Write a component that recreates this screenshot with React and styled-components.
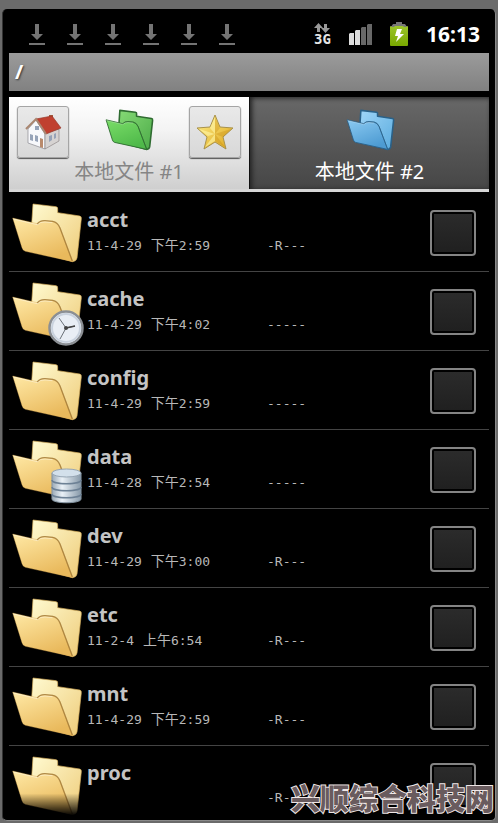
import React from "react";
import styled, { createGlobalStyle } from "styled-components";

const GlobalStyle = createGlobalStyle`
  * { box-sizing: border-box; }
  body {
    margin: 0;
    background: #6b6b6b;
    font-family: "Noto Sans", "Noto Sans CJK SC", sans-serif;
  }
  button { font: inherit; border: 0; padding: 0; margin: 0; cursor: pointer; }
  svg { display: block; }
`;

const Page = styled.div`
  height: 100vh;
  padding: 9px 2px 2px;
`;

const Device = styled.main`
  position: relative;
  display: flex;
  flex-direction: column;
  height: 100%;
  padding: 0 6px;
  overflow: hidden;
  background: #000;
  border: 1px solid #8a8a8a;
  border-width: 0 1px 1px;
  border-left-color: #333;
  border-radius: 5px;
`;

const StatusBar = styled.header`
  display: flex;
  flex: none;
  align-items: center;
  justify-content: space-between;
  height: 44px;
  padding: 6px 9px 0 20px;
`;

const StatusGroup = styled.div`
  display: flex;
  align-items: center;
  gap: ${(p) => p.$gap}px;
`;

const Network = styled.div`
  width: 17px;
  color: #e4e4e4;
  font: bold 14px/13px "DejaVu Sans Mono", monospace;
`;

const Clock = styled.time`
  color: #fff;
  font-size: 21px;
  font-weight: 700;
  line-height: 24px;
`;

const PathBar = styled.h1`
  flex: none;
  height: 38px;
  margin: 0 0 6px;
  padding-left: 6px;
  color: #fff;
  font-size: 20px;
  line-height: 37px;
  text-shadow: 1px 1px 2px #333;
  background: linear-gradient(#9b9b9b, #818181);
`;

const Tabs = styled.nav`
  display: grid;
  flex: none;
  grid-template-columns: 1fr 1fr;
  height: 95px;
  border-bottom: 3px solid #d6d6d6;
`;

const TabPanel = styled.div`
  display: flex;
  justify-content: space-between;
  padding: 0 8px;
  background: ${(p) =>
    p.$dark ? "linear-gradient(#686868, #464646)" : "linear-gradient(#fff, #f4f4f4 35%, #cfcfcf)"};
  ${(p) => p.$dark && "justify-content: center; box-shadow: inset 2px 1px 5px #222; border-left: 1px solid #111;"}
`;

const TabButton = styled.button`
  display: flex;
  flex-direction: column;
  align-items: center;
  gap: 9px;
  padding: 12px 0 0;
  color: ${(p) => (p.$dark ? "#fff" : "#858585")};
  font-size: 20px;
  line-height: 24px;
  white-space: nowrap;
  background: none;
`;

const ToolButton = styled.button`
  display: flex;
  align-items: center;
  justify-content: center;
  width: 52px;
  height: 52px;
  margin-top: 9px;
  background: linear-gradient(#e9e9e9, #d8d8d8);
  && { border: 1px solid #a5a5a5; }
  border-radius: 3px;
  box-shadow: 0 1px 1px #555;
`;

const List = styled.ul`
  flex: 1;
  min-height: 0;
  margin: 0;
  padding: 1px 0 0;
  overflow: hidden;
  list-style: none;
`;

const Row = styled.li`
  display: flex;
  align-items: flex-start;
  height: 79px;
  padding: 9px 13px 0 1px;
  border-bottom: 1px solid #444;
`;

const IconBox = styled.div`
  position: relative;
  flex: none;
  width: 77px;
  ${(p) => p.$faded && "mask-image: linear-gradient(#000 62%, transparent 98%);"}
`;

const Badge = styled.div`
  position: absolute;
  right: ${(p) => p.$right}px;
  bottom: -3px;
`;

const Info = styled.div`
  flex: 1;
  min-width: 0;
  padding-top: 4px;
`;

const Name = styled.label`
  display: block;
  color: #c4c4c4;
  font-size: 20px;
  font-weight: 700;
  line-height: 28px;
`;

const Meta = styled.div`
  display: grid;
  grid-template-columns: 180px 1fr;
  align-items: baseline;
  padding-top: 1px;
  color: #b8b8b8;
  font: 13px/20px "DejaVu Sans Mono", "Noto Sans CJK SC", monospace;
`;

const Stamp = styled.span`
  display: flex;
  align-items: baseline;
  gap: 9px;
`;

const Period = styled.span`
  font-size: 14px;
`;

const Check = styled.input`
  appearance: none;
  flex: none;
  width: 46px;
  height: 46px;
  margin: 8px 0 0;
  padding: 2px;
  background: linear-gradient(#2b2b2b, #202020) content-box;
  border: 2px solid #848484;
  border-radius: 4px;
  &:checked { background-color: #777; }
`;

const Watermark = styled.div`
  position: absolute;
  right: 1px;
  bottom: 3px;
  color: #695b5e;
  font: 900 29px/40px "Noto Sans CJK SC", sans-serif;
  white-space: nowrap;
  -webkit-text-stroke: 2px #efe6e6;
  paint-order: stroke fill;
`;

const DownloadIcon = () => (
  <svg width="16" height="21" viewBox="0 0 16 21" fill="#747474" aria-hidden="true">
    <path d="M6 0h4v10h4l-6 6-6-6h4zM0 19h16v2H0z" />
  </svg>
);

const DataArrows = () => (
  <svg width="16" height="10" viewBox="0 0 16 10" fill="#999" aria-hidden="true">
    <path d="M4.500 0L9 5H6v4H3V5H0zM10 1h3v4h3l-4.500 5L7 5h3z" />
  </svg>
);

const SignalIcon = () => (
  <svg width="23" height="21" viewBox="0 0 23 21" aria-label="Signal">
    <path fill="#dedede" d="M0 10l1-1h4v12H0zM6 7l1-1h4v15H6z" />
    <path fill="#686868" d="M12 4l1-1h4v18h-5zM18 1l1-1h4v21h-5z" />
  </svg>
);

const BatteryIcon = () => (
  <svg width="18" height="24" viewBox="0 0 18 24" aria-label="Battery charging">
    <defs>
      <linearGradient id="battery" x2="0" y2="1">
        <stop stopColor="#9bc52a" />
        <stop offset="1" stopColor="#79a800" />
      </linearGradient>
    </defs>
    <rect y="4" width="18" height="20" rx="1" fill="url(#battery)" />
    <path fill="#777" d="M6 0h6v2h3l2 3h-3l-1-1H5L4 5H1l2-3h3z" />
    <path fill="#fff" d="M7 7h5l-2 5h4L6 20l2-6H5z" />
  </svg>
);

const palettes = {
  yellow: { back: ["#fffbd2", "#eecb78"], front: ["#ffe9a6", "#e9b95c"], edge: "#9b7130" },
  green: { back: ["#86da76", "#4cab48"], front: ["#7add68", "#4fb94a"], edge: "#2f6b31" },
  blue: { back: ["#a0d6f8", "#5aabde"], front: ["#8bcaf2", "#4d9bd2"], edge: "#2a6188" },
};

const FolderIcon = ({ tone, width, height }) => {
  const p = palettes[tone];
  const small = tone !== "yellow";
  return (
    <svg width={width} height={height} viewBox="30 36 219 186" aria-hidden="true">
      <defs>
        <linearGradient id={`${tone}-back`} x2="1" y2="1">
          <stop stopColor={p.back[0]} />
          <stop offset="1" stopColor={p.back[1]} />
        </linearGradient>
        <linearGradient id={`${tone}-front`} x2="0.500" y2="1">
          <stop stopColor={p.front[0]} />
          <stop offset="1" stopColor={p.front[1]} />
        </linearGradient>
      </defs>
      <g strokeLinejoin="round">
        <path
          fill={`url(#${tone}-back)`}
          stroke={small ? p.edge : "#d9b05c"}
          strokeWidth={small ? 7 : 2}
          d="M99 42L168 50Q174 51 173 57L173 68L239 78Q245 79 244 86L231 204Q229 214 218 215L90 180Z"
        />
        <path
          fill={`url(#${tone}-front)`}
          stroke={small ? p.edge : "#d9a850"}
          strokeWidth={small ? 4 : 1}
          d="M38 84L112 101Q120 91 135 92L158 94Q173 97 180 114L218 215L76 184Q68 181 66 173Z"
        />
      </g>
      <path
        d="M112 102Q120 91 135 92L158 94Q173 97 180 114L217 213"
        fill="none"
        stroke={p.edge}
        strokeWidth={small ? 3 : 4}
        strokeOpacity=".75"
      />
      <path d="M40 87L112 104Q121 95 135 96L157 98" fill="none" stroke="#fff" strokeOpacity=".4" strokeWidth="3" />
    </svg>
  );
};

const HomeIcon = () => (
  <svg width="38" height="38" viewBox="0 0 38 38" aria-hidden="true">
    <path fill="#a25a3c" d="M25 2h4v9h-4z" />
    <path fill="#f7f8fb" stroke="#8a8a90" strokeWidth=".7" d="M4 16L12 7l9 14v15L4 30z" />
    <path fill="#d6d3d2" stroke="#817878" strokeWidth=".6" d="M21 20l14-4v12l-14 8z" />
    <path fill="#c0402f" stroke="#96392c" strokeWidth=".7" d="M12 6L28 3l9 12-15 6z" />
    <path fill="none" stroke="#a98670" strokeWidth="2" d="M2 16L12 6l10 15" />
    <path fill="#96a3b8" d="M6 21l3 1v6l-3-1zM11 22l3 1v6l-3-1zM11 13h4v4h-4zM25 23l3-1v5l-3 2zM30 21l2-1v5l-2 1z" />
    <path fill="#b98a6c" d="M16 25l3 1v9l-3-1z" />
  </svg>
);

const StarIcon = () => (
  <svg width="38" height="38" viewBox="0 0 38 38" aria-hidden="true">
    <defs>
      <linearGradient id="star" x2="1" y2="1">
        <stop stopColor="#fff08a" />
        <stop offset="1" stopColor="#dda51c" />
      </linearGradient>
    </defs>
    <path
      fill="url(#star)"
      stroke="#a9924b"
      strokeLinejoin="round"
      d="M19 2l5 12 13 1-10 9 3 12-11-7-11 7 3-12L1 15l13-1z"
    />
    <path fill="#fff6a8" fillOpacity=".6" d="M19 4v17l-5-6zM3 16l16 5-7 2zM9 34l10-13v7z" />
    <path fill="#b87800" fillOpacity=".25" d="M19 4l5 11-5 6zM35 16l-16 5 8 3zM29 34L19 21v7z" />
  </svg>
);

const ClockBadge = () => (
  <svg width="36" height="36" viewBox="0 0 36 36" aria-hidden="true">
    <circle cx="18" cy="18" r="16.500" fill="#e9eef5" stroke="#8b8f94" strokeWidth="2.500" />
    <circle cx="18" cy="18" r="14" fill="none" stroke="#c9d2de" strokeWidth="2" />
    <path d="M11 8l7 10 9-2M18 18l-6 11" fill="none" stroke="#6b7178" strokeWidth="1" />
    <path d="M18 18l9-2" stroke="#444" strokeWidth="1.500" />
    <circle cx="18" cy="18" r="2" fill="#444" />
  </svg>
);

const DatabaseBadge = () => (
  <svg width="31" height="36" viewBox="0 0 32 36" preserveAspectRatio="none" aria-hidden="true">
    <defs>
      <linearGradient id="disk">
        <stop stopColor="#9aa9b6" />
        <stop offset=".35" stopColor="#eaf1f7" />
        <stop offset="1" stopColor="#8799a9" />
      </linearGradient>
    </defs>
    <path fill="url(#disk)" stroke="#8493a1" d="M1 5v26c0 5 30 5 30 0V5z" />
    <ellipse cx="16" cy="5" rx="15" ry="4" fill="#d3e0eb" stroke="#93a3b1" />
    <path fill="none" stroke="#6d8195" strokeWidth="1.500" d="M1 12c0 5 30 5 30 0M1 19c0 5 30 5 30 0M1 26c0 5 30 5 30 0" />
  </svg>
);

const files = [
  { name: "acct", date: "11-4-29", period: "下午", time: "2:59", mode: "-R---" },
  { name: "cache", date: "11-4-29", period: "下午", time: "4:02", mode: "-----", Mark: ClockBadge, right: 3 },
  { name: "config", date: "11-4-29", period: "下午", time: "2:59", mode: "-----" },
  { name: "data", date: "11-4-28", period: "下午", time: "2:54", mode: "-----", Mark: DatabaseBadge, right: 5 },
  { name: "dev", date: "11-4-29", period: "下午", time: "3:00", mode: "-R---" },
  { name: "etc", date: "11-2-4", period: "上午", time: "6:54", mode: "-R---" },
  { name: "mnt", date: "11-4-29", period: "下午", time: "2:59", mode: "-R---" },
  { name: "proc", mode: "-R-", faded: true },
];

const FileRow = ({ file }) => {
  const { Mark } = file;
  return (
    <Row>
      <IconBox $faded={file.faded}>
        <FolderIcon tone="yellow" width={73} height={62} />
        {Mark && (
          <Badge $right={file.right}>
            <Mark />
          </Badge>
        )}
      </IconBox>
      <Info>
        <Name htmlFor={`file-${file.name}`}>{file.name}</Name>
        <Meta>
          <Stamp>
            {file.date && (
              <>
                <span>{file.date}</span>
                <span>
                  <Period>{file.period}</Period>
                  {file.time}
                </span>
              </>
            )}
          </Stamp>
          <span>{file.mode}</span>
        </Meta>
      </Info>
      <Check type="checkbox" id={`file-${file.name}`} />
    </Row>
  );
};

export default function App() {
  return (
    <Page>
      <GlobalStyle />
      <Device>
        <StatusBar>
          <StatusGroup $gap={22}>
            {[1, 2, 3, 4, 5, 6].map((n) => (
              <DownloadIcon key={n} />
            ))}
          </StatusGroup>
          <StatusGroup $gap={18}>
            <Network>
              <DataArrows />
              3G
            </Network>
            <SignalIcon />
            <BatteryIcon />
            <Clock>16:13</Clock>
          </StatusGroup>
        </StatusBar>
        <PathBar>/</PathBar>
        <Tabs>
          <TabPanel>
            <ToolButton aria-label="Home">
              <HomeIcon />
            </ToolButton>
            <TabButton>
              <FolderIcon tone="green" width={50} height={42} />
              本地文件 #1
            </TabButton>
            <ToolButton aria-label="Favorites">
              <StarIcon />
            </ToolButton>
          </TabPanel>
          <TabPanel $dark>
            <TabButton $dark>
              <FolderIcon tone="blue" width={50} height={42} />
              本地文件 #2
            </TabButton>
          </TabPanel>
        </Tabs>
        <List>
          {files.map((file) => (
            <FileRow key={file.name} file={file} />
          ))}
        </List>
        <Watermark>兴顺综合科技网</Watermark>
      </Device>
    </Page>
  );
}
